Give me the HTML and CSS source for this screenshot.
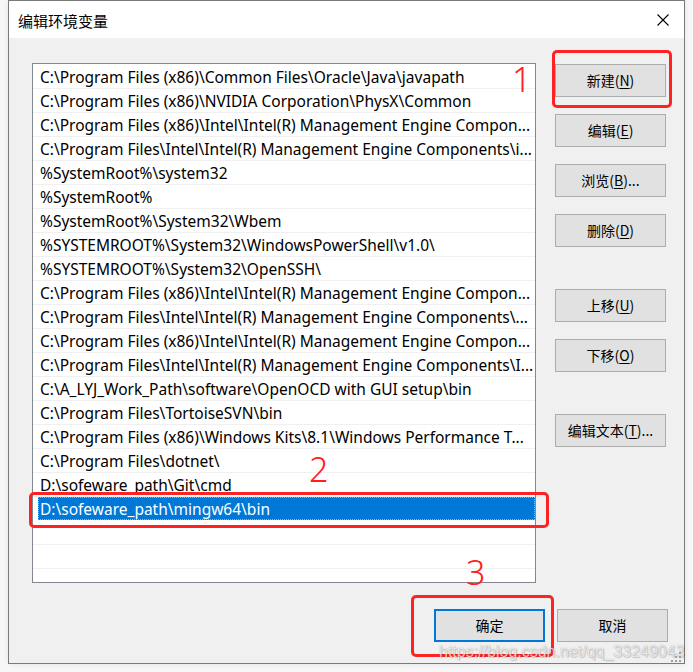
FILE: index.html
```html
<!DOCTYPE html>
<html lang="zh-CN">
<head>
<meta charset="utf-8">
<title>编辑环境变量</title>
<link rel="stylesheet" href="styles.css">
</head>
<body>
<div class="window">
  <div class="titlebar">
    <span class="title">编辑环境变量</span>
    <svg class="close" width="12" height="12" viewBox="0 0 12 12"><path d="M0.5 0.5 L11.5 11.5 M11.5 0.5 L0.5 11.5" stroke="#000" stroke-width="1.1" fill="none"/></svg>
  </div>
  <div class="body">
    <div class="content">
      <div class="list">
        <div class="row"><div class="cell">C:\Program Files (x86)\Common Files\Oracle\Java\javapath</div></div>
        <div class="row"><div class="cell">C:\Program Files (x86)\NVIDIA Corporation\PhysX\Common</div></div>
        <div class="row"><div class="cell">C:\Program Files (x86)\Intel\Intel(R) Management Engine Compon...</div></div>
        <div class="row"><div class="cell">C:\Program Files\Intel\Intel(R) Management Engine Components\i...</div></div>
        <div class="row"><div class="cell">%SystemRoot%\system32</div></div>
        <div class="row"><div class="cell">%SystemRoot%</div></div>
        <div class="row"><div class="cell">%SystemRoot%\System32\Wbem</div></div>
        <div class="row"><div class="cell">%SYSTEMROOT%\System32\WindowsPowerShell\v1.0\</div></div>
        <div class="row"><div class="cell">%SYSTEMROOT%\System32\OpenSSH\</div></div>
        <div class="row"><div class="cell">C:\Program Files (x86)\Intel\Intel(R) Management Engine Compon...</div></div>
        <div class="row"><div class="cell">C:\Program Files\Intel\Intel(R) Management Engine Components\...</div></div>
        <div class="row"><div class="cell">C:\Program Files (x86)\Intel\Intel(R) Management Engine Compon...</div></div>
        <div class="row"><div class="cell">C:\Program Files\Intel\Intel(R) Management Engine Components\I...</div></div>
        <div class="row"><div class="cell">C:\A_LYJ_Work_Path\software\OpenOCD with GUI setup\bin</div></div>
        <div class="row"><div class="cell">C:\Program Files\TortoiseSVN\bin</div></div>
        <div class="row"><div class="cell">C:\Program Files (x86)\Windows Kits\8.1\Windows Performance T...</div></div>
        <div class="row"><div class="cell">C:\Program Files\dotnet\</div></div>
        <div class="row"><div class="cell">D:\sofeware_path\Git\cmd</div></div>
        <div class="row selected"><div class="cell">D:\sofeware_path\mingw64\bin</div></div>
        <div class="row"><div class="cell"></div></div>
        <div class="row"><div class="cell"></div></div>
      </div>
      <div class="side">
        <button class="btn">新建(<u>N</u>)</button>
        <button class="btn">编辑(<u>E</u>)</button>
        <button class="btn">浏览(<u>B</u>)...</button>
        <button class="btn">删除(<u>D</u>)</button>
        <button class="btn spaced">上移(<u>U</u>)</button>
        <button class="btn">下移(<u>O</u>)</button>
        <button class="btn spaced">编辑文本(<u>T</u>)...</button>
      </div>
    </div>
    <div class="footer">
      <button class="btn primary">确定</button>
      <button class="btn">取消</button>
    </div>
  </div>
</div>

<div class="mark box1"></div>
<div class="mark box2"></div>
<div class="mark box3"></div>
<span class="num n1">1</span>
<span class="num n2">2</span>
<span class="num n3">3</span>
<span class="watermark">https://blog.csdn.net/qq_33249043</span>
<svg class="grip" width="12" height="10" viewBox="0 0 12 10">
  <rect x="8" y="0" width="2" height="2" fill="#a0a0a0"/>
  <rect x="4" y="4" width="2" height="2" fill="#a0a0a0"/>
  <rect x="8" y="4" width="2" height="2" fill="#a0a0a0"/>
  <rect x="0" y="8" width="2" height="2" fill="#a0a0a0"/>
  <rect x="4" y="8" width="2" height="2" fill="#a0a0a0"/>
  <rect x="8" y="8" width="2" height="2" fill="#a0a0a0"/>
</svg>
</body>
</html>
```

FILE: styles.css
```css
html, body {
  margin: 0;
  padding: 0;
}
body {
  width: 693px;
  height: 672px;
  background: #f7f7f7;
  position: relative;
  overflow: hidden;
  font-family: "Noto Sans", "Noto Sans CJK SC", sans-serif;
}
.window {
  box-sizing: border-box;
  margin-left: 8px;
  width: 677px;
  height: 664px;
  border: 1px solid #7a7a7a;
  background: #f0f0f0;
  display: flex;
  flex-direction: column;
  box-shadow: 0 0 6px rgba(0,0,0,0.08);
}
.titlebar {
  height: 37px;
  background: #ffffff;
  display: flex;
  align-items: center;
  justify-content: space-between;
  padding: 0 15px 0 9px;
}
.title {
  font-family: "Noto Sans CJK SC", sans-serif;
  font-size: 15px;
  color: #000;
  margin-top: 1px;
}
.close {
  display: block;
  margin-top: 1px;
}
.body {
  flex: 1;
  display: flex;
  flex-direction: column;
}
.content {
  display: flex;
  padding: 25px 0 0 23px;
  gap: 19px;
}
.list {
  box-sizing: border-box;
  width: 504px;
  height: 520px;
  border: 1px solid #828790;
  background: #ffffff;
  padding-top: 1px;
  overflow: hidden;
}
.row {
  height: 23px;
  border-bottom: 1px solid #f0f0f0;
}
.cell {
  height: 23px;
  margin-left: 5px;
  padding-left: 2px;
  font-size: 15.5px;
  line-height: 25px;
  color: #000;
  white-space: nowrap;
  overflow: hidden;
}
.row.selected {
  border-bottom-color: #ffffff;
}
.row.selected .cell {
  background: #0078d7;
  color: #ffffff;
  outline: 1px dotted #f0a040;
  outline-offset: -1px;
}
.side {
  display: flex;
  flex-direction: column;
  padding-top: 1px;
}
.btn {
  box-sizing: border-box;
  width: 111px;
  height: 33px;
  border: 1px solid #adadad;
  background: #e1e1e1;
  font-family: "Noto Sans CJK SC", sans-serif;
  font-size: 14px;
  line-height: 29px;
  color: #000;
  padding: 0;
  margin: 0;
}
.side .btn {
  margin-bottom: 17px;
}
.side .btn.spaced {
  margin-top: 25px;
}
.btn u {
  text-decoration-thickness: 1px;
  text-underline-offset: 2px;
}
.footer {
  display: flex;
  justify-content: flex-end;
  gap: 12px;
  padding: 26px 16px 0 0;
}
.btn.primary {
  border: 2px solid #0078d7;
}
.mark {
  position: absolute;
  box-sizing: border-box;
  border: 3px solid #ff2222;
  border-radius: 5px;
}
.box1 { left: 552px; top: 50px; width: 120px; height: 58px; }
.box2 { left: 29px; top: 492px; width: 520px; height: 36px; }
.box3 { left: 411px; top: 595px; width: 143px; height: 62px; }
.num {
  position: absolute;
  font-family: "Noto Sans", sans-serif;
  font-weight: 300;
  font-size: 34px;
  line-height: 1;
  color: #ff2020;
}
.n1 { left: 512px; top: 62px; }
.n2 { left: 309px; top: 452px; }
.n3 { left: 466px; top: 555px; }
.watermark {
  position: absolute;
  left: 439px;
  top: 641px;
  font-family: "Liberation Sans", sans-serif;
  font-size: 16px;
  line-height: 22px;
  color: rgba(255,255,255,0.75);
  text-shadow: 0 0 1px rgba(0,0,0,0.35), 1px 1px 1px rgba(0,0,0,0.15);
  white-space: nowrap;
}
.grip {
  position: absolute;
  left: 671px;
  top: 652px;
}
```
